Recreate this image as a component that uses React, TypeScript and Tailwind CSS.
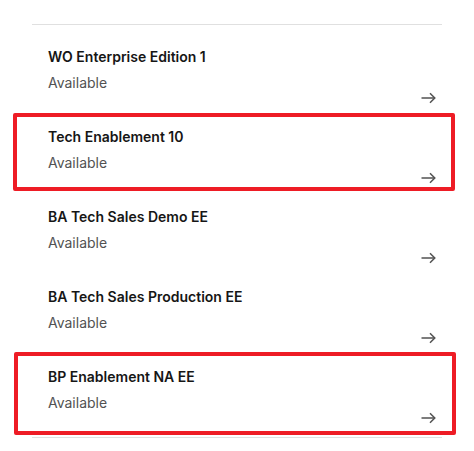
const environments = [
  { name: 'WO Enterprise Edition 1', status: 'Available', flagged: '' },
  { name: 'Tech Enablement 10', status: 'Available', flagged: 'top-0 bottom-[2px] -left-[19px] -right-[13px]' },
  { name: 'BA Tech Sales Demo EE', status: 'Available', flagged: '' },
  { name: 'BA Tech Sales Production EE', status: 'Available', flagged: '' },
  { name: 'BP Enablement NA EE', status: 'Available', flagged: '-top-[1px] -bottom-[2px] -left-[18px] -right-[14px]' },
];

function ArrowIcon() {
  return (
    <svg width="16" height="16" viewBox="0 0 16 16" fill="none" stroke="#525252" strokeWidth="1.5">
      <path d="M1.5 8h13.5" />
      <path d="M10 3.2l4.8 4.8L10 12.8" />
    </svg>
  );
}

export default function App() {
  return (
    <div className="min-h-[451px] bg-white font-['Inter','Noto_Sans',sans-serif] pt-6">
      <div className="mx-8 border-t border-b border-[#e0e0e0]">
        <ul className="pt-2 pb-[4px]">
          {environments.map((env) => (
            <li key={env.name} className="relative h-20 px-4 pt-[15px]">
              <a href="#" className="flex flex-col gap-2">
                <span className="text-[14px] leading-[18px] font-semibold text-[#161616]">{env.name}</span>
                <span className="text-[14px] leading-[18px] text-[#525252]">{env.status}</span>
              </a>
              <span className="absolute right-[6px] bottom-[7px]">
                <ArrowIcon />
              </span>
              {env.flagged && (
                <div className={`absolute ${env.flagged} border-4 border-[#ee1c25] rounded-[2px] pointer-events-none`} />
              )}
            </li>
          ))}
        </ul>
      </div>
    </div>
  );
}
